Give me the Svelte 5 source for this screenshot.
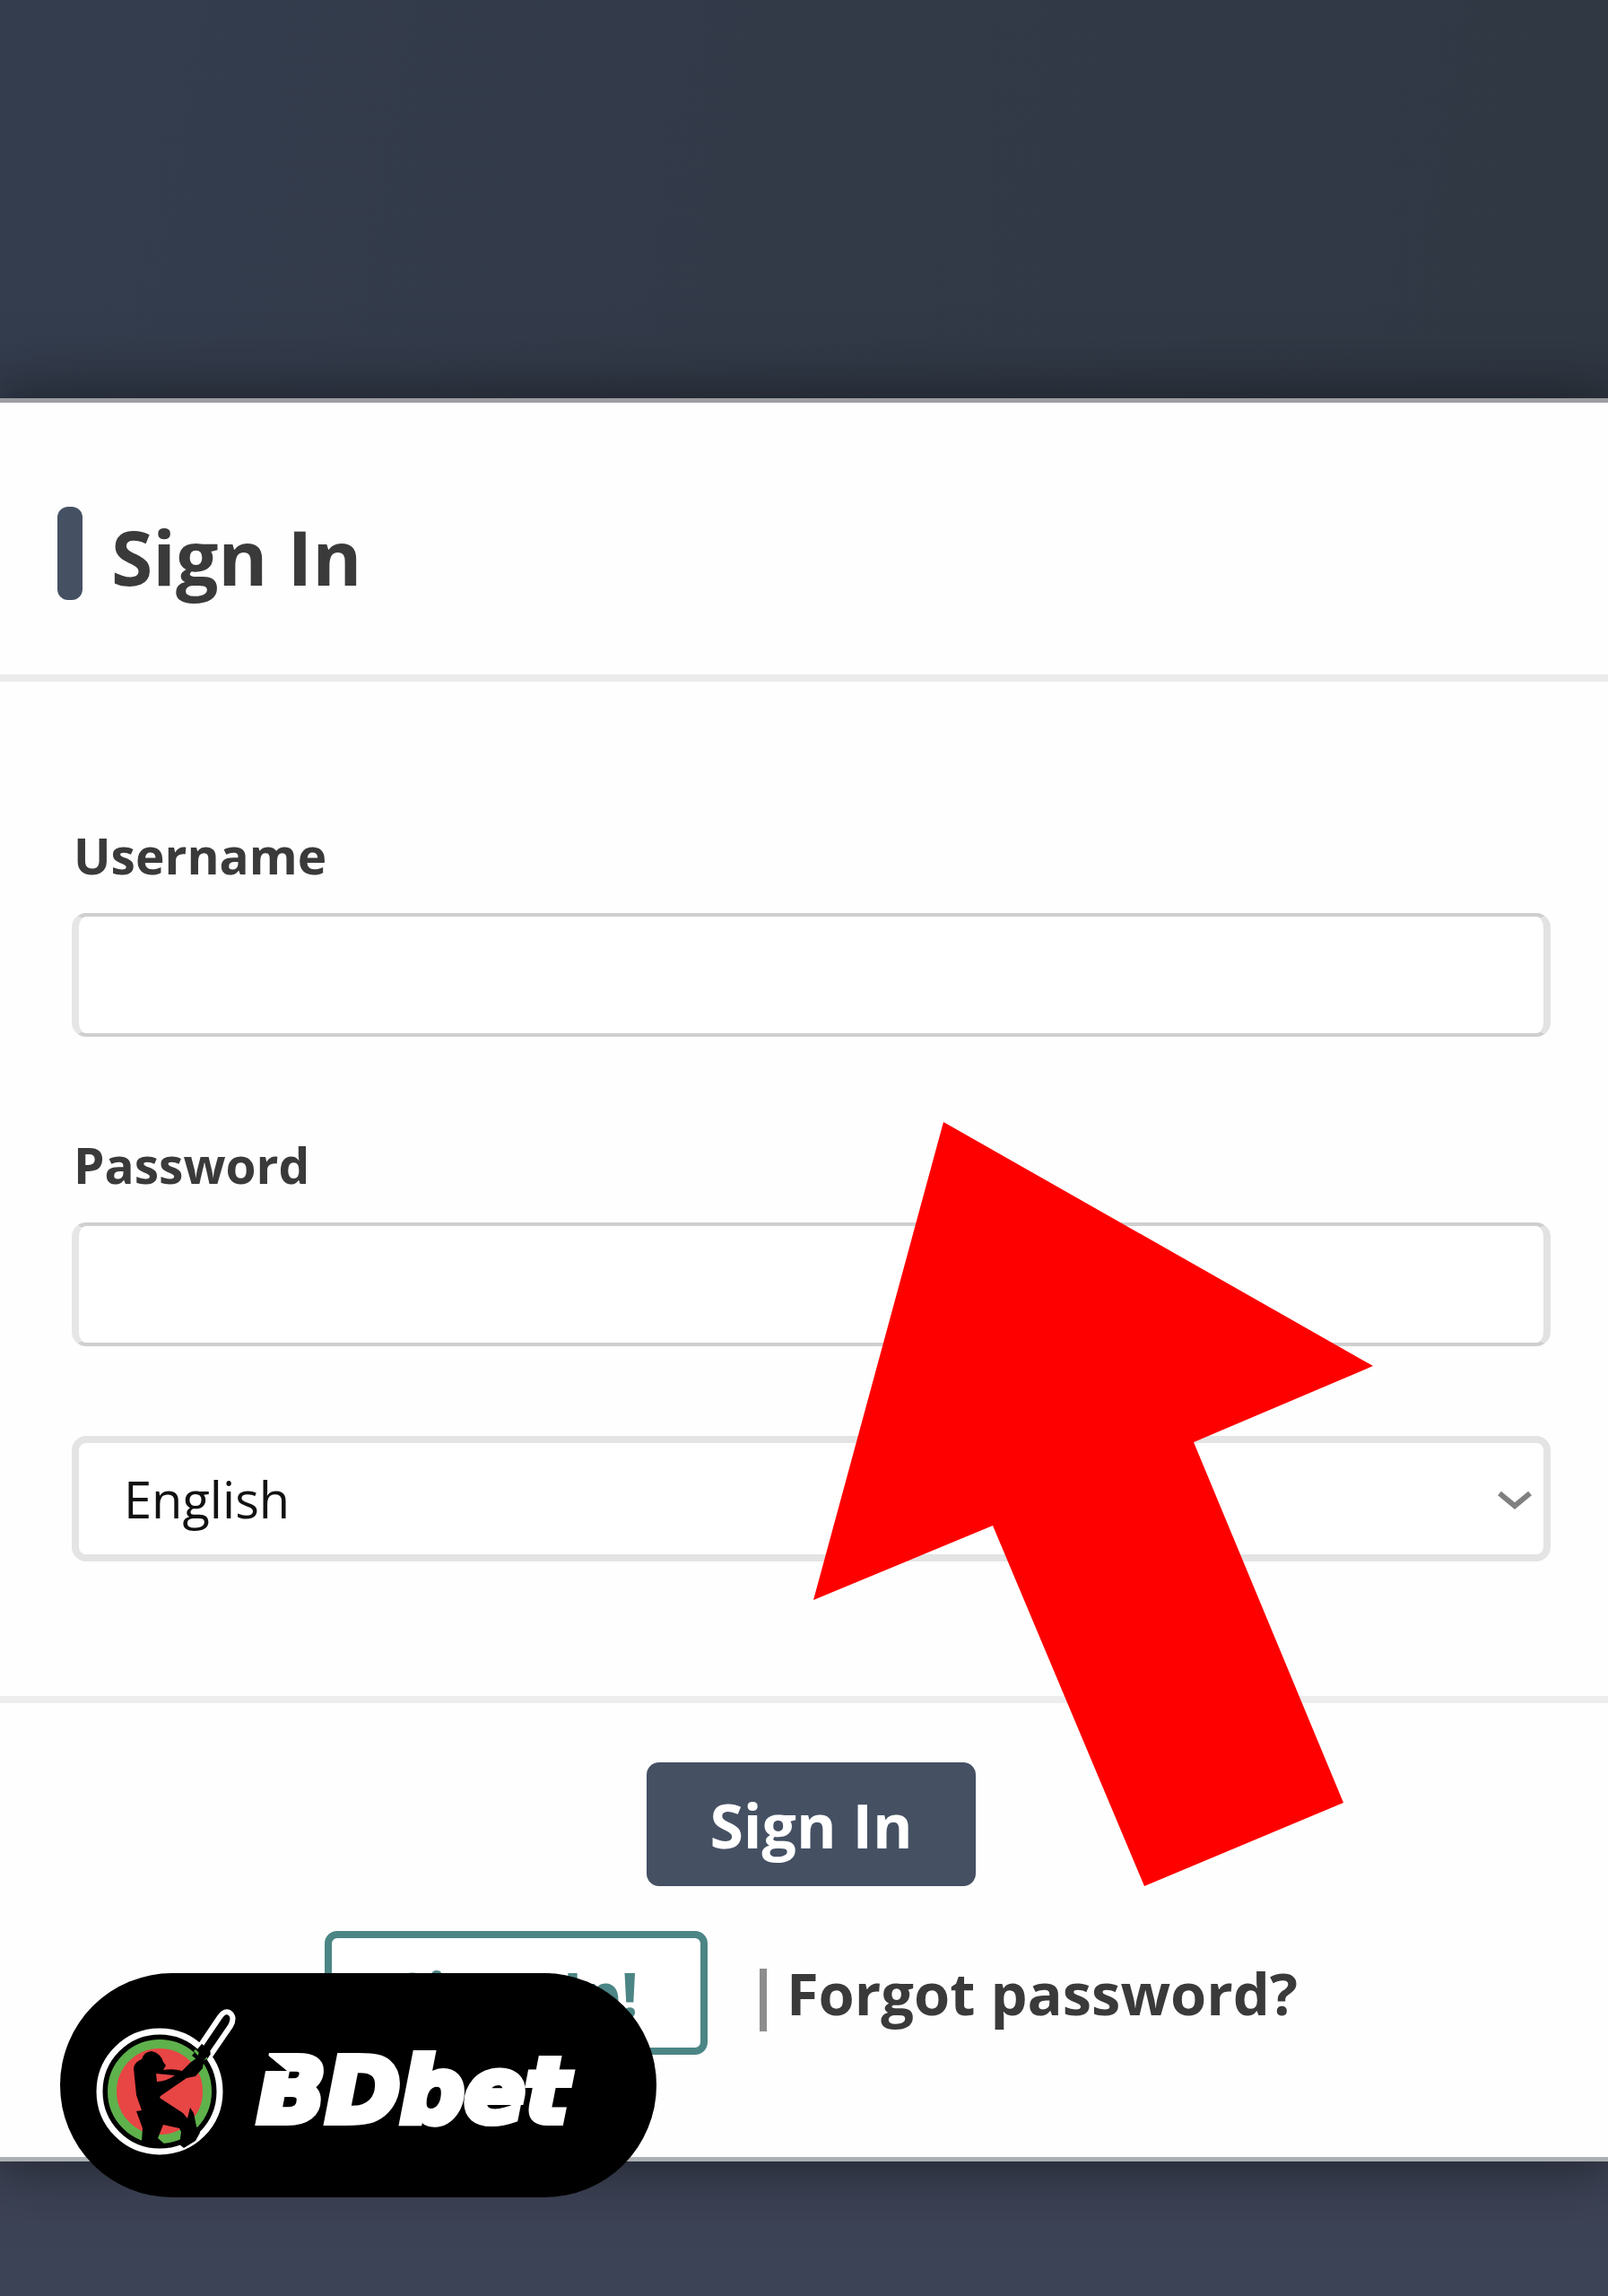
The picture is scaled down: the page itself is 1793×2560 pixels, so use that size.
<script>
  let username = $state('');
  let password = $state('');
  let language = $state('en');
</script>

<main class="page">
  <form class="card" onsubmit={(e) => e.preventDefault()}>
    <header class="head">
      <span class="accent"></span>
      <h1>Sign In</h1>
    </header>

    <div class="fields">
      <div class="field">
        <label for="username">Username</label>
        <input id="username" type="text" bind:value={username} />
      </div>
      <div class="field">
        <label for="password">Password</label>
        <input id="password" type="password" bind:value={password} />
      </div>
      <div class="picker">
        <select aria-label="Language" bind:value={language}>
          <option value="en">English</option>
        </select>
        <svg class="chevron" viewBox="0 0 40 24" aria-hidden="true">
          <path d="M3 4 L20 18 L37 4" fill="none" stroke="#808080" stroke-width="6" />
        </svg>
      </div>
    </div>

    <footer class="actions">
      <button class="primary" type="submit">Sign In</button>
      <div class="links">
        <button class="outline" type="button">Sign Up!</button>
        <span class="divider"></span>
        <a href="#forgot">Forgot password?</a>
      </div>
    </footer>

    <svg class="arrow" viewBox="0 0 624 852" aria-hidden="true">
      <polygon points="145,0 624,272 424,357 591,759 369,852 200,450 0,533" fill="#fe0000" />
    </svg>

    <div class="brand">
      <svg viewBox="0 0 665 250" role="img" aria-label="BDbet">
        <rect width="665" height="250" rx="125" ry="125" fill="#000" />
        <circle cx="111" cy="132" r="67" fill="#000" stroke="#fff" stroke-width="7" />
        <circle cx="111" cy="132" r="53" fill="#e84545" stroke="#5fb14c" stroke-width="10" />
        <path d="M155 83 L178 49 Q184 40 190 45 Q195 50 190 59 L166 94" fill="#000" stroke="#fff" stroke-width="6" stroke-linejoin="round" />
        <path d="M147 92 L158 79 L168 90 L160 102 Z" fill="#000" />
        <path d="M150 86 L156 92 M158 97 L164 94" stroke="#5fb14c" stroke-width="3" />
        <path fill="#000" d="M91 96 Q93 88 102 87 Q112 89 115 99 L118 103 L115 108 Q126 106 136 109 L145 100 L153 94 L158 79 L168 88 L160 98 L159 106 L151 115 L141 117 L112 137 L111 139 L137 156 L142 162 L145 150 L149 156 L152 171 L156 178 L151 187 L138 195 L133 191 L135 177 L133 173 L115 169 L109 184 L117 191 L113 192 Q98 192 91 187 L92 173 L85 154 L91 153 L85 136 L82 106 Q83 99 91 96 Z" />
        <path d="M107 112 L128 114 Q118 121 108 121 Z" fill="#e84545" />
        <text x="220" y="166" class="word">BDbet</text>
        <path d="M210 90 L230 90 L253 109 L210 109 Z" fill="#000" />
      </svg>
    </div>
  </form>
</main>

<style>
  :global(body) {
    margin: 0;
  }
  .page {
    box-sizing: border-box;
    min-height: 100vh;
    padding: 444px 0 144px;
    background: linear-gradient(100deg, #343d4e 0%, #323a48 50%, #303844 100%) top / 100% 460px no-repeat, #3d4356;
    font-family: 'Open Sans', 'Noto Sans', sans-serif;
    color: #3a3a3a;
    overflow: hidden;
  }
  .card {
    position: relative;
    background: #fefefe;
    border-top: 5px solid #9c9ea2;
    border-bottom: 5px solid #adb0b3;
    box-shadow: 0 0 60px 8px rgba(16, 18, 22, 0.6);
  }
  .head {
    display: flex;
    align-items: center;
    gap: 32px;
    height: 303px;
    padding: 0 64px;
    border-bottom: 8px solid #ebebeb;
  }
  .accent {
    width: 28px;
    height: 104px;
    margin-top: 32px;
    border-radius: 12px;
    background: #455063;
  }
  h1 {
    margin: 40px 0 0;
    font-size: 84px;
    line-height: 104px;
    font-weight: 700;
  }
  .fields {
    display: flex;
    flex-direction: column;
    padding: 158px 64px 150px 80px;
  }
  .field {
    display: flex;
    flex-direction: column;
    margin-bottom: 107px;
  }
  .field + .field {
    margin-bottom: 100px;
  }
  label {
    margin-bottom: 28px;
    padding-left: 2px;
    font-size: 55px;
    line-height: 72px;
    font-weight: 700;
  }
  input,
  select {
    box-sizing: border-box;
    width: 100%;
    height: 138px;
    margin: 0;
    padding: 0 50px;
    border: 4px solid #cfcfcf;
    border-left: 8px solid #e6e6e6;
    border-right: 8px solid #e2e2e2;
    border-radius: 16px;
    background: #fff;
    font-family: inherit;
    font-size: 56px;
    color: #111;
  }
  select {
    display: block;
    height: 140px;
    appearance: none;
    border: 8px solid #e4e4e4;
  }
  .picker {
    position: relative;
  }
  .chevron {
    position: absolute;
    top: 60px;
    right: 20px;
    width: 40px;
    height: 24px;
    pointer-events: none;
  }
  .actions {
    display: flex;
    flex-direction: column;
    align-items: center;
    gap: 50px;
    padding: 66px 0 114px 16px;
    border-top: 8px solid #ededed;
  }
  button {
    box-sizing: border-box;
    height: 138px;
    margin: 0;
    border-radius: 14px;
    font-family: inherit;
    font-size: 68px;
    line-height: 88px;
    font-weight: 700;
  }
  .primary {
    padding: 2px 70px 0;
    border: 0;
    background: #455063;
    color: #fff;
  }
  .links {
    display: flex;
    align-items: center;
  }
  .outline {
    padding: 2px 69px 0;
    border: 8px solid #4c8585;
    background: #fff;
    color: #4c8585;
  }
  .divider {
    width: 8px;
    height: 70px;
    margin: 16px 22px 0 58px;
    background: #8c8c8c;
  }
  a {
    font-size: 65px;
    line-height: 88px;
    font-weight: 700;
    color: #3a3a3a;
    text-decoration: none;
  }
  .arrow {
    position: absolute;
    top: 802px;
    left: 907px;
    width: 624px;
    height: 852px;
    pointer-events: none;
  }
  .brand {
    position: absolute;
    left: 67px;
    bottom: -45px;
    width: 665px;
    height: 250px;
  }
  .brand svg {
    display: block;
    width: 100%;
    height: 100%;
  }
  .word {
    font-family: 'DejaVu Sans', sans-serif;
    font-size: 100px;
    font-weight: 700;
    font-style: italic;
    fill: #fff;
    stroke: #fff;
    stroke-width: 8px;
  }
</style>
